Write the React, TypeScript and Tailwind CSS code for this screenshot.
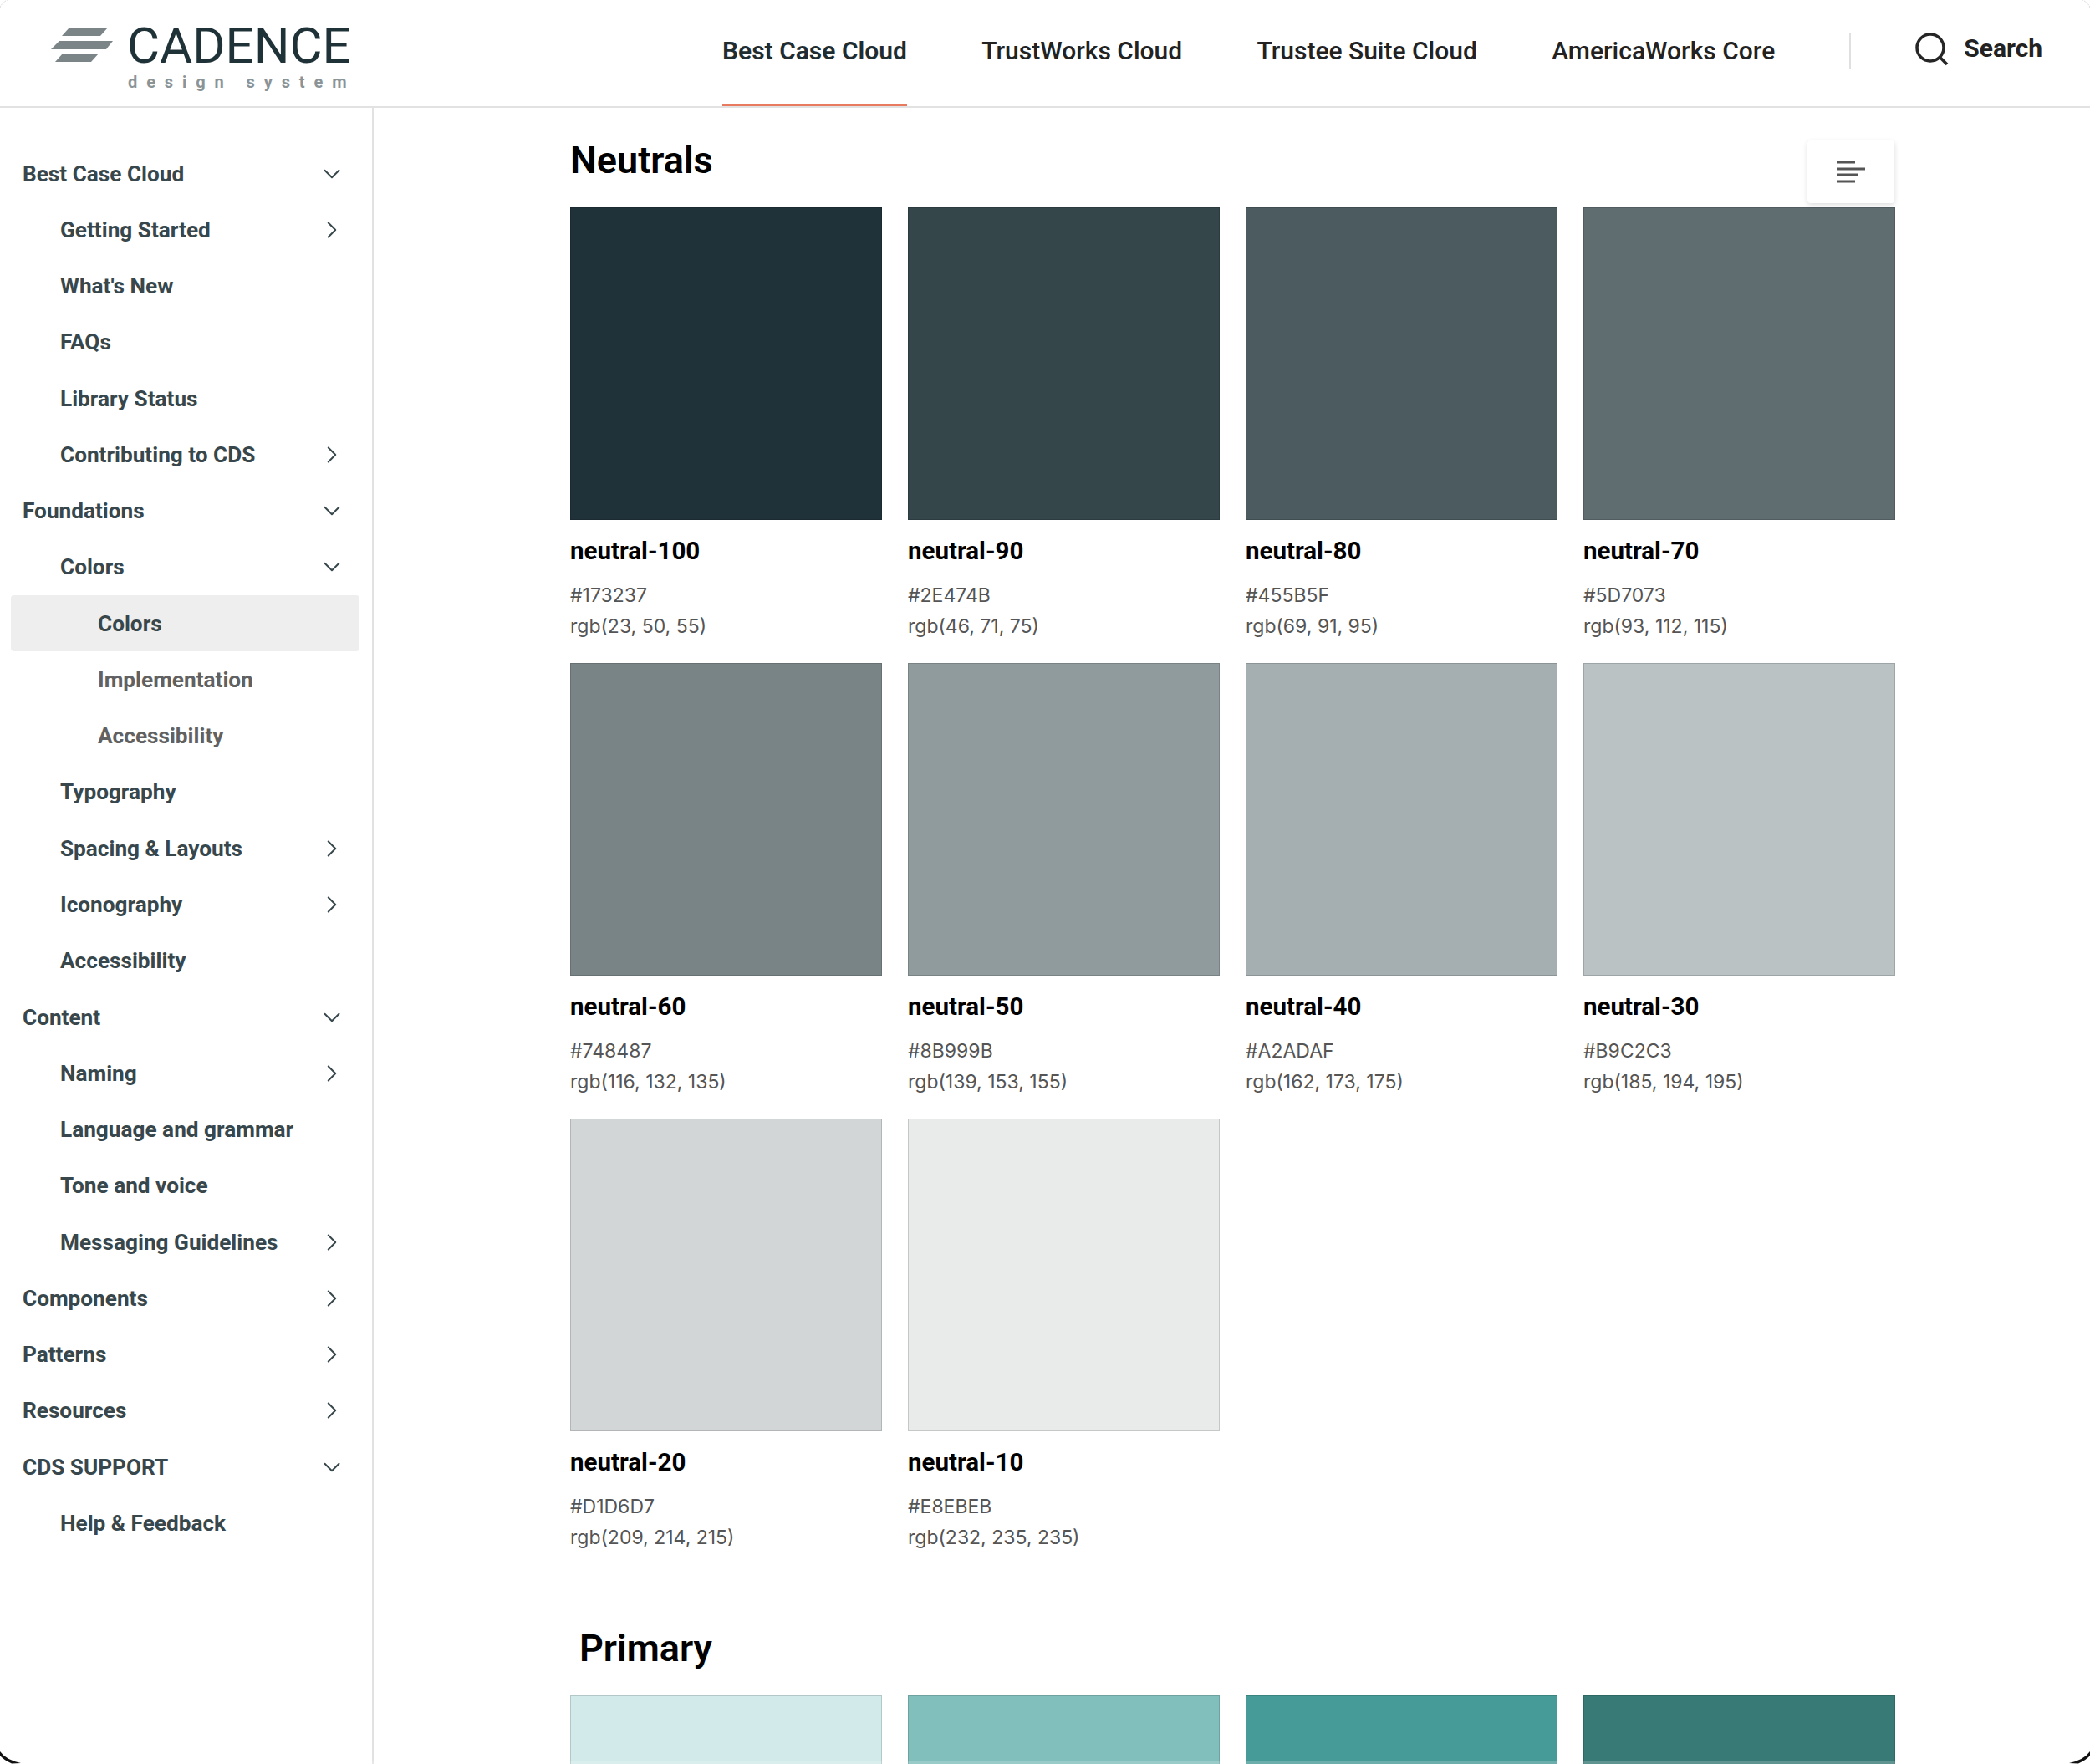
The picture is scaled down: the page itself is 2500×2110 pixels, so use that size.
import { ChevronDown, ChevronRight } from "lucide-react"

type NavItem = {
  label: string
  level: 1 | 2 | 3
  icon?: "down" | "right"
  active?: boolean
  muted?: boolean
}

type Swatch = {
  name: string
  hex: string
  rgb: string
  fill: string
}

const navItems: NavItem[] = [
  { label: "Best Case Cloud", level: 1, icon: "down" },
  { label: "Getting Started", level: 2, icon: "right" },
  { label: "What's New", level: 2 },
  { label: "FAQs", level: 2 },
  { label: "Library Status", level: 2 },
  { label: "Contributing to CDS", level: 2, icon: "right" },
  { label: "Foundations", level: 1, icon: "down" },
  { label: "Colors", level: 2, icon: "down" },
  { label: "Colors", level: 3, active: true },
  { label: "Implementation", level: 3, muted: true },
  { label: "Accessibility", level: 3, muted: true },
  { label: "Typography", level: 2 },
  { label: "Spacing & Layouts", level: 2, icon: "right" },
  { label: "Iconography", level: 2, icon: "right" },
  { label: "Accessibility", level: 2 },
  { label: "Content", level: 1, icon: "down" },
  { label: "Naming", level: 2, icon: "right" },
  { label: "Language and grammar", level: 2 },
  { label: "Tone and voice", level: 2 },
  { label: "Messaging Guidelines", level: 2, icon: "right" },
  { label: "Components", level: 1, icon: "right" },
  { label: "Patterns", level: 1, icon: "right" },
  { label: "Resources", level: 1, icon: "right" },
  { label: "CDS SUPPORT", level: 1, icon: "down" },
  { label: "Help & Feedback", level: 2 },
]

const neutrals: Swatch[] = [
  { name: "neutral-100", hex: "#173237", rgb: "rgb(23, 50, 55)", fill: "bg-[#203239]" },
  { name: "neutral-90", hex: "#2E474B", rgb: "rgb(46, 71, 75)", fill: "bg-[#34464a]" },
  { name: "neutral-80", hex: "#455B5F", rgb: "rgb(69, 91, 95)", fill: "bg-[#4b5b5f]" },
  { name: "neutral-70", hex: "#5D7073", rgb: "rgb(93, 112, 115)", fill: "bg-[#5f6d71]" },
  { name: "neutral-60", hex: "#748487", rgb: "rgb(116, 132, 135)", fill: "bg-[#798487]" },
  { name: "neutral-50", hex: "#8B999B", rgb: "rgb(139, 153, 155)", fill: "bg-[#8f9b9c]" },
  { name: "neutral-40", hex: "#A2ADAF", rgb: "rgb(162, 173, 175)", fill: "bg-[#a5aeb0]" },
  { name: "neutral-30", hex: "#B9C2C3", rgb: "rgb(185, 194, 195)", fill: "bg-[#bac2c3]" },
  { name: "neutral-20", hex: "#D1D6D7", rgb: "rgb(209, 214, 215)", fill: "bg-[#d2d6d7]" },
  { name: "neutral-10", hex: "#E8EBEB", rgb: "rgb(232, 235, 235)", fill: "bg-[#e9ebea]" },
]

const primaries = ["bg-[#d2eaea]", "bg-[#80bfbc]", "bg-[#469a98]", "bg-[#377a76]"]

function SideRow({ item }: { item: NavItem }) {
  const indent = item.level === 1 ? "pl-[14px]" : item.level === 2 ? "pl-[59px]" : "pl-[104px]"
  return (
    <div
      className={`flex h-[67.27px] items-center justify-between rounded-[4px] pr-[16px] ${indent} ${
        item.active ? "bg-[#eeeeee]" : ""
      } ${item.muted ? "text-[#616161]" : "text-[#37474c]"}`}
    >
      <span className="text-[26.2px] font-bold leading-none">{item.label}</span>
      {item.icon === "down" && <ChevronDown size={34} strokeWidth={1.4} className="text-[#37474c]" />}
      {item.icon === "right" && <ChevronRight size={34} strokeWidth={1.4} className="text-[#37474c]" />}
    </div>
  )
}

function SwatchCard({ swatch }: { swatch: Swatch }) {
  return (
    <div>
      <div className={`h-[374px] border border-black/15 ${swatch.fill}`}></div>
      <div className="mt-[19px] text-[29.5px] font-bold leading-[36px] text-black">{swatch.name}</div>
      <div className="mt-[16.5px] font-['Inter',sans-serif] text-[23px] leading-[37px] text-[#555555]">
        <div>{swatch.hex}</div>
        <div>{swatch.rgb}</div>
      </div>
    </div>
  )
}

function Logo() {
  return (
    <div className="flex items-start">
      <svg width="76" height="44" viewBox="0 0 76 44" className="mt-[32px] ml-[60px] fill-[#7b8588]">
        <polygon points="23,1 69,1 60,11 14,11" />
        <polygon points="11,17 75,17 67,27 1,27" />
        <polygon points="15,32 58,32 49,42 6,42" />
      </svg>
      <div className="mt-[24px] ml-[16px]">
        <div className="text-[60px] font-normal leading-[62px] text-[#1f3238]">CADENCE</div>
        <div className="ml-[1px] text-[20px] font-bold leading-[24px] tracking-[0.545em] whitespace-nowrap text-[#8a9497]">
          design system
        </div>
      </div>
    </div>
  )
}

function ScreenCorners() {
  return (
    <>
      <svg width="10" height="10" viewBox="0 0 10 10" className="absolute top-0 left-0 fill-none stroke-[#d8d8d8]">
        <path d="M0 9 Q2 3 9 0" strokeDasharray="2 1" />
      </svg>
      <svg width="10" height="10" viewBox="0 0 10 10" className="absolute top-0 right-0 fill-none stroke-[#d8d8d8]">
        <path d="M10 9 Q8 3 1 0" strokeDasharray="2 1" />
      </svg>
      <svg width="26" height="16" viewBox="0 0 26 16" className="absolute bottom-0 left-0 fill-[#111111]">
        <path d="M0 1 Q7 11 25 15 L14 15.5 Q4 11 0 6 Z" />
      </svg>
      <svg width="26" height="16" viewBox="0 0 26 16" className="absolute right-0 bottom-0 fill-[#111111]">
        <path d="M26 1 Q19 11 1 15 L12 15.5 Q22 11 26 6 Z" />
      </svg>
    </>
  )
}

export default function App() {
  return (
    <div className="relative flex h-[2110px] w-[2500px] flex-col overflow-hidden bg-white font-['Roboto',sans-serif]">
      <header className="flex h-[129px] shrink-0 items-start border-b-2 border-[#e2e2e2]">
        <div className="w-[864px]">
          <Logo />
        </div>
        <nav className="flex gap-[89.3px] text-[30px] font-medium leading-none text-[#222222]">
          <a className="flex h-[127px] items-center border-b-[3px] border-[#e87b5f] pb-[2px] font-semibold text-[#1f2d31]">
            Best Case Cloud
          </a>
          <a className="flex h-[127px] items-center pb-[5px]">TrustWorks Cloud</a>
          <a className="flex h-[127px] items-center pb-[5px]">Trustee Suite Cloud</a>
          <a className="flex h-[127px] items-center pb-[5px]">AmericaWorks Core</a>
        </nav>
        <div className="mt-[39px] ml-[89px] h-[44px] w-[2px] bg-[#e0e0e0]"></div>
        <div className="mt-[39px] ml-[77px] flex items-center gap-[18px] text-[30px] font-bold leading-none text-[#222222]">
          <svg width="40" height="40" viewBox="0 0 40 40" className="fill-none stroke-[#262626] stroke-[3.5px]">
            <circle cx="18" cy="18" r="16" />
            <path d="M30 30 L38 38" />
          </svg>
          <span className="-mt-[2px]">Search</span>
        </div>
      </header>

      <div className="flex min-h-0 flex-1">
        <aside className="w-[447px] shrink-0 border-r-2 border-[#e2e2e2] pt-[45px]">
          <div className="ml-[13px] w-[417px]">
            {navItems.map((item, index) => (
              <SideRow key={index} item={item} />
            ))}
          </div>
        </aside>

        <main className="relative flex-1 pl-[235px]">
          <h2 className="mt-[38px] text-[45px] font-semibold leading-[50px] text-black">Neutrals</h2>
          <div className="mt-[31px] grid w-[1585px] grid-cols-4 gap-x-[31px] gap-y-[25.5px]">
            {neutrals.map((swatch) => (
              <SwatchCard key={swatch.name} swatch={swatch} />
            ))}
          </div>
          <h2 className="mt-[89px] ml-[11px] text-[45px] font-semibold leading-[50px] text-black">Primary</h2>
          <div className="mt-[31px] grid w-[1585px] grid-cols-4 gap-x-[31px]">
            {primaries.map((fill) => (
              <div key={fill} className={`h-[374px] border border-black/15 ${fill}`}></div>
            ))}
          </div>
          <button className="absolute top-[39px] left-[1715px] flex h-[75px] w-[104px] items-center justify-center rounded-[4px] bg-white shadow-[0_2px_6px_rgba(0,0,0,0.14)]">
            <svg width="34" height="28" viewBox="0 0 34 28" className="stroke-[#555555] stroke-[3px]">
              <path d="M0 2 H22 M0 10 H34 M0 17 H25 M0 25 H22" />
            </svg>
          </button>
        </main>
      </div>

      <div className="absolute right-0 bottom-0 left-0 h-[3px] bg-white/20"></div>
      <ScreenCorners />
    </div>
  )
}
